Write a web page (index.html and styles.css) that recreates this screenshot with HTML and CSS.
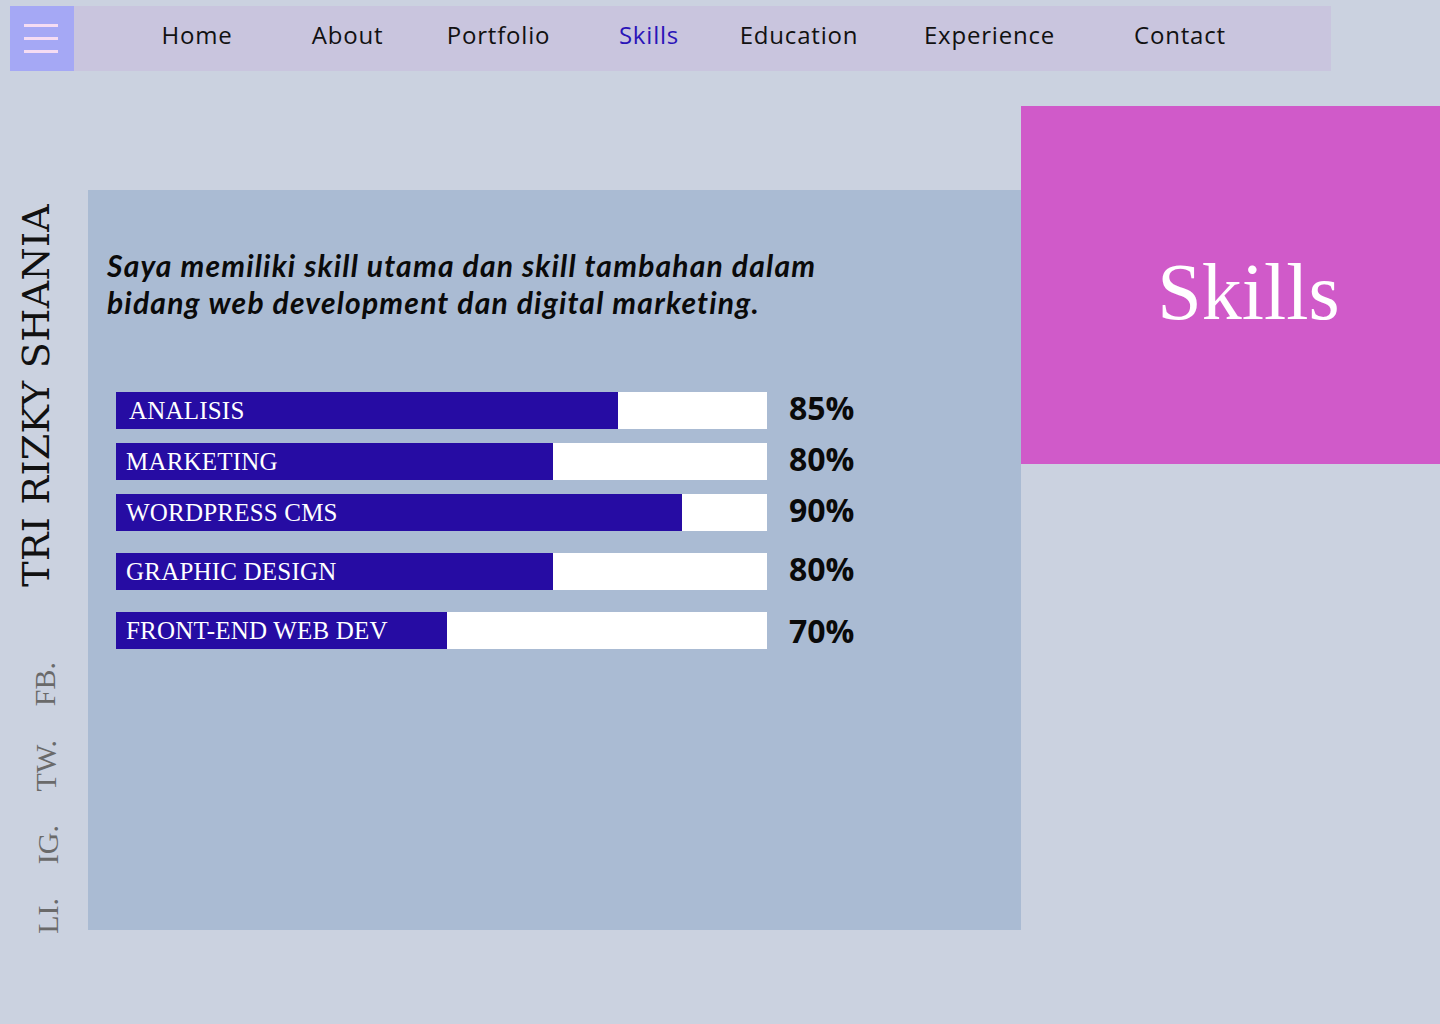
FILE: index.html
```html
<!DOCTYPE html>
<html lang="id">
<head>
<meta charset="utf-8">
<title>Skills - Tri Rizky Shania</title>
<link rel="stylesheet" href="styles.css">
</head>
<body>
<header class="nav">
  <button class="burger" aria-label="menu">
    <span></span><span></span><span></span>
  </button>
  <ul class="menu">
    <li class="m-home">Home</li>
    <li class="m-about">About</li>
    <li class="m-port">Portfolio</li>
    <li class="m-skills active">Skills</li>
    <li class="m-edu">Education</li>
    <li class="m-exp">Experience</li>
    <li class="m-contact">Contact</li>
  </ul>
</header>
<main class="main">
  <aside class="side">
    <div class="name">TRI RIZKY SHANIA</div>
    <div class="socials">
      <span class="soc soc-fb">FB.</span>
      <span class="soc soc-tw">TW.</span>
      <span class="soc soc-ig">IG.</span>
      <span class="soc soc-li">LI.</span>
    </div>
  </aside>
  <section class="panel">
    <p class="intro">Saya memiliki skill utama dan skill tambahan dalam<br>bidang web development dan digital marketing.</p>
    <div class="skills">
      <div class="skill">
        <div class="bar"><div class="fill" style="width:502px"></div><span class="label label-first">ANALISIS</span></div>
        <span class="pct">85%</span>
      </div>
      <div class="skill">
        <div class="bar"><div class="fill" style="width:437px"></div><span class="label">MARKETING</span></div>
        <span class="pct">80%</span>
      </div>
      <div class="skill">
        <div class="bar"><div class="fill" style="width:566px"></div><span class="label">WORDPRESS CMS</span></div>
        <span class="pct">90%</span>
      </div>
      <div class="skill gap-more">
        <div class="bar"><div class="fill" style="width:437px"></div><span class="label">GRAPHIC DESIGN</span></div>
        <span class="pct">80%</span>
      </div>
      <div class="skill gap-more">
        <div class="bar"><div class="fill" style="width:331px"></div><span class="label">FRONT-END WEB DEV</span></div>
        <span class="pct pct-last">70%</span>
      </div>
    </div>
  </section>
  <section class="hero">
    <h1>Skills</h1>
  </section>
</main>
</body>
</html>
```
FILE: styles.css
```css
* { box-sizing: border-box; }
html, body { margin: 0; padding: 0; }
body {
  background: #cbd2e0;
  width: 1440px;
  height: 1024px;
  overflow: hidden;
  font-family: "Liberation Serif", serif;
}

/* NAV */
.nav {
  display: flex;
  margin: 6px 0 0 10px;
  width: 1321px;
  height: 65px;
  background: #c9c5de;
}
.burger {
  width: 64px;
  height: 65px;
  border: 0;
  padding: 0 16px 0 14px;
  background: #a5a8f5;
  display: flex;
  flex-direction: column;
  justify-content: center;
  gap: 10px;
}
.burger span {
  display: block;
  width: 34px;
  height: 3px;
  background: #f5dcf3;
}
.menu {
  list-style: none;
  margin: 0;
  padding: 0 0 0 48px;
  display: grid;
  grid-template-columns: 150px 151px 151px 150px 150px 231px 150px;
  align-items: center;
  font-family: "Open Sans", sans-serif;
  font-size: 24px;
  letter-spacing: 0.8px;
  color: #111;
}
.menu li { text-align: center; padding-bottom: 9px; }
.menu li.active { color: #2a14b8; }

/* MAIN */
.main {
  display: flex;
  align-items: flex-start;
}
.side {
  width: 88px;
  flex: none;
  display: flex;
  flex-direction: column;
  align-items: flex-start;
  padding-top: 133px;
}
.name {
  writing-mode: vertical-rl;
  transform: rotate(180deg);
  font-family: "DejaVu Serif", serif;
  font-size: 38px;
  line-height: 38px;
  color: #111;
  margin-left: 17px;
  letter-spacing: 0.3px;
}
.socials {
  margin-top: 75px;
  margin-left: 28px;
  display: flex;
  flex-direction: column;
  gap: 34px;
}
.soc {
  writing-mode: vertical-rl;
  transform: rotate(180deg);
  font-family: "Liberation Serif", serif;
  font-size: 30px;
  line-height: 32px;
  color: #6a6a6a;
}
.soc-fb { margin-left: 1px; }
.soc-tw { margin-left: 2px; }
.soc-ig { margin-left: 4px; }
.soc-li { margin-left: 4px; }

.panel {
  width: 933px;
  height: 740px;
  margin-top: 119px;
  background: #aabbd3;
  padding: 57px 0 0 19px;
  flex: none;
}
.intro {
  margin: 0;
  font-family: "Lato", sans-serif;
  font-style: italic;
  font-weight: 700;
  font-size: 30px;
  line-height: 37px;
  color: #0a0a0a;
  letter-spacing: 1.2px;
}
.skills {
  margin-top: 71px;
  margin-left: 9px;
  display: flex;
  flex-direction: column;
  gap: 14px;
}
.skill {
  display: flex;
  align-items: center;
  gap: 22px;
}
.skill.gap-more { margin-top: 8px; }
.bar {
  position: relative;
  width: 651px;
  height: 37px;
  background: #ffffff;
}
.fill {
  height: 100%;
  background: #260ca3;
}
.label {
  position: absolute;
  left: 10px;
  top: 0;
  line-height: 37px;
  font-family: "Liberation Serif", serif;
  font-size: 25px;
  color: #ffffff;
  letter-spacing: 0.2px;
}
.label-first { left: 13px; }
.pct {
  font-family: "Open Sans", sans-serif;
  font-weight: 700;
  font-size: 32px;
  color: #0a0a0a;
  line-height: 37px;
  margin-top: -6px;
}
.pct-last { margin-top: -1px; }

.hero {
  width: 419px;
  height: 358px;
  margin-top: 35px;
  background: #d05ac9;
  display: flex;
  align-items: center;
  justify-content: center;
  flex: none;
}
.hero h1 {
  margin: 14px 0 0 36px;
  font-family: "Liberation Serif", serif;
  font-weight: 400;
  font-size: 80px;
  color: #ffffff;
}
```
